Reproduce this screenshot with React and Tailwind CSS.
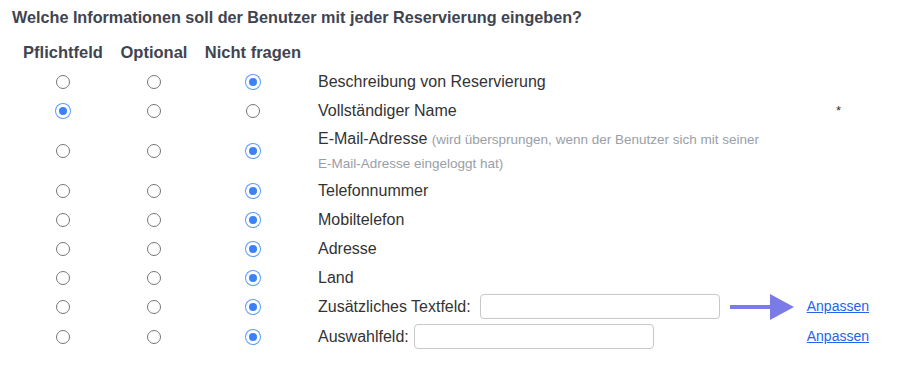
import React from 'react';

const rows = [
  { label: 'Beschreibung von Reservierung', value: 2 },
  { label: 'Vollständiger Name', value: 0, star: true },
  { label: 'E-Mail-Adresse', value: 2, hint: true },
  { label: 'Telefonnummer', value: 2 },
  { label: 'Mobiltelefon', value: 2 },
  { label: 'Adresse', value: 2 },
  { label: 'Land', value: 2 },
  { label: 'Zusätzliches Textfeld:', value: 2, input: true, link: true, arrow: true },
  { label: 'Auswahlfeld:', value: 2, input: true, link: true },
];

function Radio({ checked }) {
  if (checked) {
    return (
      <span className="block w-[14px] h-[14px] rounded-full bg-[#3b82f6] border-[3px] border-white ring-1 ring-[#5b9bf8]" />
    );
  }
  return <span className="block w-[14px] h-[14px] rounded-full border border-[#767676] bg-white" />;
}

function Arrow() {
  return (
    <svg width="64" height="26" viewBox="0 0 64 26" className="block">
      <rect x="0" y="11" width="42" height="4" fill="#7b7be8" />
      <polygon points="40,0 64,13 40,26" fill="#7b7be8" />
    </svg>
  );
}

export default function App() {
  return (
    <div className="w-[900px] h-[366px] bg-white font-['Liberation_Sans',Arial,sans-serif] text-[#333]">
      <h2 className="pl-[12px] pt-[5px] h-[37px] text-[16.2px] font-bold text-[#3f4451]">
        Welche Informationen soll der Benutzer mit jeder Reservierung eingeben?
      </h2>
      <div className="flex h-[30px] items-center text-[16.5px] font-bold text-[#3f4451]">
        <div className="w-[112px] shrink-0 pl-[14px] text-center">Pflichtfeld</div>
        <div className="w-[84px] shrink-0 text-center">Optional</div>
        <div className="w-[114px] shrink-0 text-center">Nicht fragen</div>
      </div>
      {rows.map((row, i) => (
        <div
          key={i}
          className={
            'flex items-center ' +
            (row.hint ? 'h-[51px]' : row.input ? (row.arrow ? 'h-[29px]' : 'h-[31px]') : 'h-[29px]')
          }
        >
          {[0, 1, 2].map((c) => (
            <div
              key={c}
              className={
                'flex shrink-0 justify-center ' +
                (c === 0 ? 'w-[112px] pl-[14px]' : c === 1 ? 'w-[84px]' : 'w-[114px]')
              }
            >
              <Radio checked={row.value === c} />
            </div>
          ))}
          <div className="flex-1 min-w-0 flex items-center pl-[8px] pr-[31px] text-[16px]">
            <div className="flex-1 min-w-0">
              {row.hint ? (
                <div className="w-[480px] leading-[23px]">
                  E-Mail-Adresse{' '}
                  <span className="text-[13.5px] text-[#9a9ea6]">
                    (wird übersprungen, wenn der Benutzer sich mit seiner{' '}
                    <span className="whitespace-nowrap">E-Mail-Adresse</span> eingeloggt hat)
                  </span>
                </div>
              ) : row.input ? (
                <div className={'flex items-center ' + (row.arrow ? 'gap-[9px]' : 'gap-[5px]')}>
                  <span>{row.label}</span>
                  <span className="block w-[240px] h-[25px] rounded-[4px] border border-[#c8c8c8] bg-white" />
                </div>
              ) : (
                <span>{row.label}</span>
              )}
            </div>
            <div className="shrink-0 flex items-center">
              {row.arrow && (
                <span className="mr-[13px]">
                  <Arrow />
                </span>
              )}
              {row.link && (
                <a href="#" className="text-[14px] text-[#2563eb] underline">
                  Anpassen
                </a>
              )}
              {row.star && <span className="mr-[28px] text-[13px]">*</span>}
            </div>
          </div>
        </div>
      ))}
    </div>
  );
}
